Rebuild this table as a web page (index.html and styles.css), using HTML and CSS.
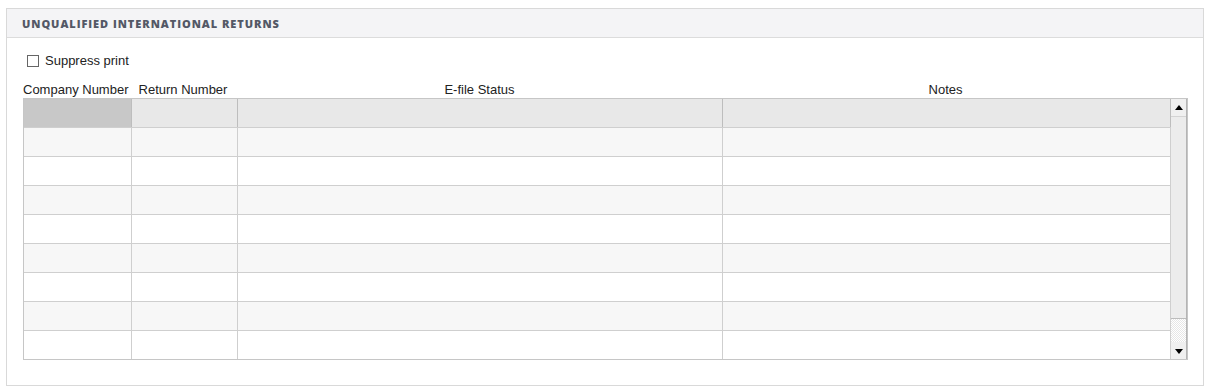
FILE: index.html
```html
<!DOCTYPE html>
<html lang="en">

<head>
  <meta charset="UTF-8" />
  <title>Unqualified International Returns</title>
  <link rel="stylesheet" href="styles.css">
</head>

<body>
  <section class="panel">
    <header class="panel-head">
      <h2>Unqualified International Returns</h2>
    </header>

    <div class="panel-body">
      <label class="check">
        <span class="box"></span>
        Suppress print
      </label>

      <div class="labels">
        <span class="c1">Company Number</span>
        <span class="c2">Return Number</span>
        <span class="c3">E-file Status</span>
        <span class="c4">Notes</span>
      </div>

      <div class="grid">
        <table>
          <colgroup>
            <col class="c1" />
            <col class="c2" />
            <col class="c3" />
            <col class="c4" />
          </colgroup>
          <tbody>
            <tr class="current"><td class="sel"></td><td></td><td></td><td></td></tr>
            <tr class="alt"><td></td><td></td><td></td><td></td></tr>
            <tr><td></td><td></td><td></td><td></td></tr>
            <tr class="alt"><td></td><td></td><td></td><td></td></tr>
            <tr><td></td><td></td><td></td><td></td></tr>
            <tr class="alt"><td></td><td></td><td></td><td></td></tr>
            <tr><td></td><td></td><td></td><td></td></tr>
            <tr class="alt"><td></td><td></td><td></td><td></td></tr>
            <tr><td></td><td></td><td></td><td></td></tr>
          </tbody>
        </table>

        <div class="scrollbar">
          <div class="arrow up"></div>
          <div class="thumb"></div>
          <div class="track"></div>
          <div class="arrow down"></div>
        </div>
      </div>
    </div>
  </section>
</body>

</html>
```

FILE: styles.css
```css
html,
body {
  overflow: hidden;
}

body {
  margin: 8px 0 0 6px;
  font-family: 'Liberation Sans', Arial, sans-serif;
  font-size: 13px;
  color: #222;
  background: #fff;
}

.panel {
  width: 1196px;
  height: 376px;
  border: 1px solid #d9d9d9;
}

.panel-head {
  height: 28px;
  background: #f4f4f6;
  border-bottom: 1px solid #dcdcdc;
  display: flex;
  align-items: center;
  padding-left: 15px;
}

.panel-head h2 {
  margin: 0;
  font-family: 'Open Sans', 'Liberation Sans', sans-serif;
  font-size: 11px;
  font-weight: 800;
  letter-spacing: 0.95px;
  text-transform: uppercase;
  color: #535866;
}

.panel-body {
  padding: 15px 0 0 16px;
}

.check {
  display: flex;
  align-items: center;
  height: 15px;
  padding-left: 4px;
  gap: 6px;
  color: #222;
}

.check .box {
  width: 10px;
  height: 10px;
  border: 1px solid #666;
  background: #fff;
}

/* column captions above the grid */
.labels {
  display: flex;
  margin-top: 14px;
  height: 15px;
  line-height: 15px;
  color: #222;
}

.labels span {
  text-align: center;
  white-space: nowrap;
}

.labels .c1 { width: 104px; }
.labels .c2 { width: 112px; }
.labels .c3 { width: 481px; }
.labels .c4 { width: 451px; }

.grid {
  display: flex;
  width: 1163px;
  margin-top: 1px;
  border: 1px solid #c6c6c6;
}

.grid table {
  border-collapse: collapse;
  table-layout: fixed;
  width: 1146px;
}

col.c1 { width: 107px; }
col.c2 { width: 106px; }
col.c3 { width: 485px; }
col.c4 { width: 448px; }

.grid td {
  height: 28px;
  padding: 0;
  border-right: 1px solid #cfcfcf;
  border-bottom: 1px solid #cfcfcf;
}

.grid tr:last-child td {
  border-bottom: none;
}

.grid tr.current td {
  background: #e8e8e8;
  border-right-color: #bdbdbd;
}

.grid tr.current td.sel {
  background: #c8c8c8;
}

.grid tr.alt td {
  background: #f7f7f7;
}

.scrollbar {
  width: 17px;
  display: flex;
  flex-direction: column;
  background: #f0f0f0;
  border-right: 1px solid #b4b4b4;
  box-sizing: border-box;
}

.scrollbar .arrow {
  height: 17px;
  position: relative;
  background: #f0f0f0;
}

.scrollbar .up {
  border-bottom: 1px solid #d4d4d4;
}

.scrollbar .arrow::after {
  content: '';
  position: absolute;
  left: 4px;
  top: 6px;
  border-left: 4px solid transparent;
  border-right: 4px solid transparent;
}

.scrollbar .up::after {
  border-bottom: 5px solid #000;
}

.scrollbar .down::after {
  top: 7px;
  border-top: 5px solid #000;
}

.scrollbar .thumb {
  height: 201px;
  background: #ececec;
  border-bottom: 1px solid #bcbcbc;
}

.scrollbar .track {
  flex: 1;
  background: repeating-conic-gradient(#fff 0 25%, #e6e6e6 0 50%) 0 0 / 2px 2px;
}
```
